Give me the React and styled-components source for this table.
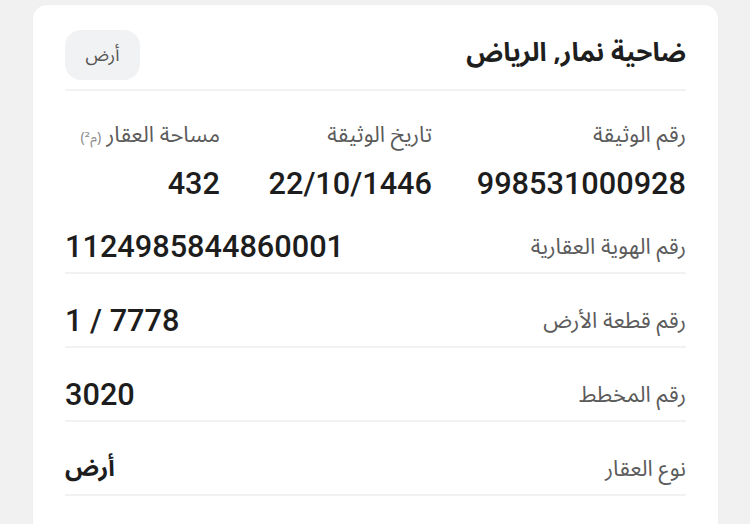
import React from "react";
import styled, { createGlobalStyle } from "styled-components";

const Global = createGlobalStyle`
  html, body { margin: 0; padding: 0; background: #f1f1f1; }
  body { font-family: "Noto Sans Arabic", "Noto Kufi Arabic", "DejaVu Sans", sans-serif; overflow: hidden; }
`;

const arabic = `"Noto Sans Arabic", "Noto Kufi Arabic", "DejaVu Sans", sans-serif`;
const digits = `Roboto, "Liberation Sans", sans-serif`;

const Page = styled.div`
  padding: 5px 32px 0 33px;
`;

const Card = styled.section`
  direction: rtl;
  background: #ffffff;
  border-radius: 14px;
  padding: 25px 32px 60px 32px;
  box-shadow: 0 0 2px rgba(0, 0, 0, 0.04);
`;

const Header = styled.header`
  display: flex;
  align-items: center;
  justify-content: space-between;
  padding-bottom: 9px;
  border-bottom: 2px solid #f2f2f3;
`;

const Title = styled.h1`
  margin: 0;
  font-family: ${arabic};
  font-size: 26px;
  line-height: 44px;
  font-weight: 700;
  color: #1e1e1e;
  transform: translateY(-2px);
`;

const Badge = styled.span`
  display: flex;
  align-items: center;
  justify-content: center;
  width: 75px;
  height: 50px;
  border-radius: 16px;
  background: #f1f2f4;
  font-family: ${arabic};
  font-size: 18px;
  color: #555;
`;

const Summary = styled.div`
  display: grid;
  grid-template-columns: 254px 212px 1fr;
  row-gap: 20px;
  margin-top: 31px;
`;

const Label = styled.span`
  display: block;
  font-family: ${arabic};
  font-size: 22px;
  line-height: 26px;
  color: #5b5b5b;
  white-space: nowrap;
`;

const Unit = styled.span`
  font-size: 14px;
  color: #8a8a8a;
  margin-right: 5px;
`;

const Value = styled.span`
  display: block;
  direction: ltr;
  text-align: ${(p) => (p.$align === "right" ? "right" : "left")};
  font-family: ${(p) => (p.$arabic ? arabic : digits)};
  font-size: ${(p) => (p.$arabic ? "24px" : "30.7px")};
  font-weight: ${(p) => (p.$arabic ? 700 : 500)};
  line-height: 26px;
  color: #1d1d1d;
  white-space: pre;
`;

const Cell = styled.div`
  display: flex;
  justify-content: flex-start;
`;

const Row = styled.div`
  display: flex;
  align-items: center;
  justify-content: space-between;
  margin-top: ${(p) => (p.$first ? "25px" : "22px")};
  padding: 12px 0;
  border-bottom: 2px solid #f2f2f3;
`;

const summary = [
  { label: "رقم الوثيقة", value: "998531000928" },
  { label: "تاريخ الوثيقة", value: "22/10/1446" },
  { label: "مساحة العقار", unit: true, value: "432" },
];

const rows = [
  { label: "رقم الهوية العقارية", value: "1124985844860001" },
  { label: "رقم قطعة الأرض", value: "1 / 7778" },
  { label: "رقم المخطط", value: "3020" },
  { label: "نوع العقار", value: "أرض", arabic: true },
];

export default function App() {
  return (
    <Page>
      <Global />
      <Card>
        <Header>
          <Title>ضاحية نمار, الرياض</Title>
          <Badge>أرض</Badge>
        </Header>
        <Summary>
          {summary.map((s) => (
            <Cell key={s.label}>
              <Label>
                {s.label}
                {s.unit && <Unit>(م²)</Unit>}
              </Label>
            </Cell>
          ))}
          {summary.map((s) => (
            <Cell key={s.value}>
              <Value $align="right">{s.value}</Value>
            </Cell>
          ))}
        </Summary>
        {rows.map((r, i) => (
          <Row key={r.label} $first={i === 0}>
            <Label>{r.label}</Label>
            <Value $arabic={r.arabic}>{r.value}</Value>
          </Row>
        ))}
      </Card>
    </Page>
  );
}
